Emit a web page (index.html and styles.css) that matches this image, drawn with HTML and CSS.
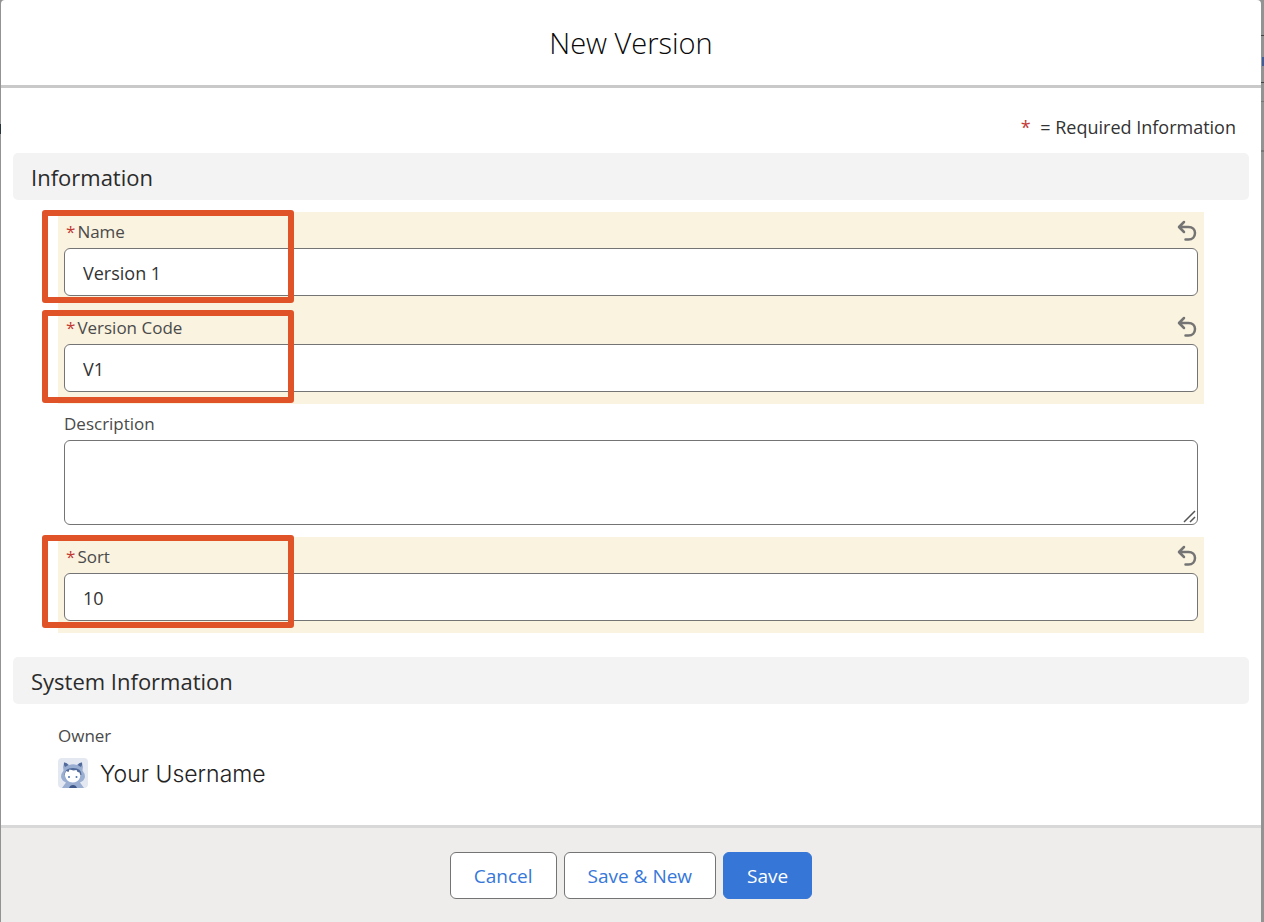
FILE: index.html
```html
<!DOCTYPE html>
<html lang="en">
<head>
<meta charset="utf-8">
<meta name="viewport" content="width=device-width, initial-scale=1">
<title>New Version</title>
<link rel="stylesheet" href="styles.css">
</head>
<body>
<svg class="defs" width="0" height="0" aria-hidden="true">
  <symbol id="undo" viewBox="0 0 20 22"><path d="M6.500 2 1.500 7l5 5M2 7h9c4 0 6.500 2.500 6.500 6s-2.500 6.500-6.500 6.500H8" fill="none" stroke="#747474" stroke-width="2.500" stroke-linecap="round" stroke-linejoin="round"/></symbol>
</svg>
<div class="backdrop">
  <i class="rule rule-a"></i><i class="rule rule-b"></i><i class="rule rule-c"></i><i class="rule rule-d"></i><i class="rule link"></i><i class="rule mark"></i>
  <form class="modal" role="dialog" aria-labelledby="title">
    <header class="header"><h1 id="title">New Version</h1></header>
    <main class="content">
      <p class="required"><span class="star">*</span> = Required Information</p>
      <h2 class="section">Information</h2>
      <div class="fields">
        <div class="field edited">
          <div class="label-row"><label for="name"><span class="star">*</span>Name</label><button type="button" class="undo" aria-label="Undo Name"><svg><use href="#undo"/></svg></button></div>
          <input id="name" class="control" type="text" value="Version 1">
          <span class="highlight"></span>
        </div>
        <div class="field edited">
          <div class="label-row"><label for="code"><span class="star">*</span>Version Code</label><button type="button" class="undo" aria-label="Undo Version Code"><svg><use href="#undo"/></svg></button></div>
          <input id="code" class="control" type="text" value="V1">
          <span class="highlight lower"></span>
        </div>
        <div class="field">
          <div class="label-row plain"><label for="description">Description</label></div>
          <div class="area">
            <textarea id="description" class="control"></textarea>
            <svg class="grip" viewBox="0 0 14 14" aria-hidden="true"><path d="M1 12 12 1M7 12l5-5" stroke="#555" stroke-width="1.500"/></svg>
          </div>
        </div>
        <div class="field edited">
          <div class="label-row"><label for="sort"><span class="star">*</span>Sort</label><button type="button" class="undo" aria-label="Undo Sort"><svg><use href="#undo"/></svg></button></div>
          <input id="sort" class="control" type="text" value="10">
          <span class="highlight"></span>
        </div>
      </div>
      <h2 class="section">System Information</h2>
      <div class="owner">
        <span class="owner-label">Owner</span>
        <div class="user">
          <svg class="avatar" viewBox="0 0 30 30" aria-hidden="true">
            <defs><clipPath id="round"><rect width="30" height="30" rx="4"/></clipPath></defs>
            <g clip-path="url(#round)">
              <rect width="30" height="30" fill="#e4e8f1"/>
              <path d="M6 4.500q3 0 5 2.500 4-1.500 8 0 2-2.500 5-2.500 1.500 4 .5 8 2.500 3 2.500 6.500-1 4-5 5.500l4 5.500H4l4-5.500q-4-1.500-5-5.500 0-3.500 2.500-6.500-1-4 .5-8z" fill="#9aaed2"/>
              <path d="M6 4.500q3 0 4.500 2.500L7 9q-1.500-2-1-4.500zM24 4.500q-3 0-4.500 2.500L23 9q1.500-2 1-4.500z" fill="#526a99"/>
              <path d="M6.500 17q0-7 8.500-7t8.500 7z" fill="#526a99"/>
              <path d="M7 18q-.5-2 1-5l2.500 1 1-2.500 4 1 3-.5 1 2 2 .5q1.500 3 .5 5-2 5-7.500 5T7 18z" fill="#fff"/>
              <circle cx="11" cy="19" r="1" fill="#4e73ad"/><circle cx="18.500" cy="19" r="1" fill="#4e73ad"/>
              <path d="M11 30q1-3 4-3t4 3z" fill="#40598a"/>
            </g>
          </svg>
          <span class="username">Your Username</span>
        </div>
      </div>
    </main>
    <footer class="footer">
      <button type="button" class="button">Cancel</button>
      <button type="button" class="button">Save &amp; New</button>
      <button type="submit" class="button primary">Save</button>
    </footer>
  </form>
</div>
</body>
</html>
```
FILE: styles.css
```css
* { box-sizing: border-box; }
body { margin: 0; font-family: "Open Sans", "Noto Sans", sans-serif; font-size: 18px; color: #333; }
h1, h2, p { margin: 0; font-weight: 400; }
.defs { position: absolute; }
.backdrop { position: relative; display: flex; min-height: 100vh; padding: 0 3px 0 1px; background: #939393; }
.rule { position: absolute; right: 0; width: 3px; height: 1px; background: #444; }
.rule-a { top: 35px; }
.rule-b { top: 82px; }
.rule-c { top: 101px; background: #777; }
.rule-d { top: 150px; height: 2px; background: #777; }
.link { top: 57px; width: 2px; height: 9px; background: #3e5e9b; }
.mark { right: auto; left: 0; top: 124px; width: 1px; height: 10px; background: #26323c; }
.modal { position: relative; display: flex; flex: 1; flex-direction: column; background: #fff; border-radius: 4px 4px 0 0; }
.header { padding: 22px 16px; border-bottom: 3px solid #c9c9c9; text-align: center; }
h1 { font-size: 29px; line-height: 41px; font-weight: 300; color: #080808; }
.content { flex: 1; padding: 24px 12px 0; }
.required { margin-bottom: 11px; padding-right: 13px; line-height: 30px; text-align: right; }
.star { color: #c23934; }
.required .star { margin-right: 5px; }
.section { padding: 1px 18px 0; border-radius: 5px; background: #f3f3f3; font-size: 22px; line-height: 46px; color: #2b2b2b; }
.section + .fields { margin: 12px 45px 24px; }
.field { position: relative; padding: 0 6px 12px; }
.edited { background: #faf3e0; }
.label-row { display: flex; align-items: center; justify-content: space-between; height: 36px; padding: 2px 0 0 2px; color: #4a4a4a; font-size: 17px; }
.label-row.plain { padding-left: 0; }
.label-row .star { margin-right: 2px; }
.undo { display: flex; padding: 0; border: 0; background: none; }
.undo svg { width: 21px; height: 22px; }
.control { display: block; width: 100%; height: 48px; padding: 1px 18px 0; border: 1px solid #747474; border-radius: 6px; background: #fff; font: inherit; color: #333; }
textarea.control { height: 85px; padding: 10px 18px; resize: none; }
.area { position: relative; }
.grip { position: absolute; right: 1px; bottom: 1px; width: 14px; height: 14px; }
.highlight { position: absolute; top: -2px; left: -16px; width: 252px; height: 93px; border: 6px solid #e05329; border-radius: 3px; pointer-events: none; }
.highlight.lower { top: 2px; }
.owner { padding: 20px 45px; }
.owner-label { display: block; font-size: 17px; line-height: 24px; color: #4a4a4a; }
.user { display: flex; align-items: center; gap: 12px; margin-top: 10px; }
.avatar { width: 30px; height: 30px; }
.username { padding-top: 2px; font-family: Inter, "Liberation Sans", sans-serif; font-size: 23px; line-height: 28px; font-weight: 300; color: #222; }
.footer { display: flex; justify-content: center; gap: 7px; padding: 24px 16px 23px; border-top: 3px solid #d8d8d8; background: #eeedec; }
.button { height: 47px; padding: 0 23px; border: 1px solid #747474; border-radius: 6px; background: #fff; color: #3677d9; font: inherit; font-size: 19px; }
.primary { border-color: #3576d6; background: #3576d6; color: #fff; }
```
